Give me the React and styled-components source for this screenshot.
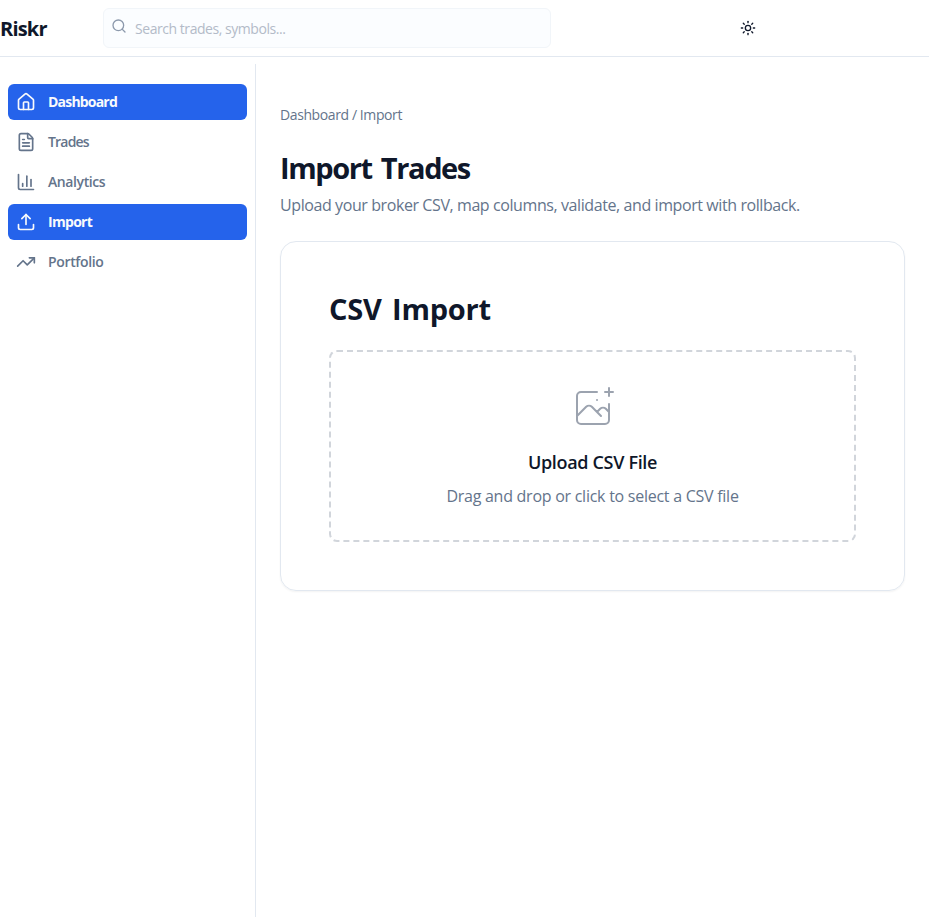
import React from 'react';
import styled, { createGlobalStyle } from 'styled-components';
import { House, FileText, ChartColumn, Upload, TrendingUp, Search, Sun } from 'lucide-react';

const GlobalStyle = createGlobalStyle`
  *, *::before, *::after { box-sizing: border-box; }
  body {
    margin: 0;
    background: #fff;
    color: #0f172a;
    font-family: "Segoe UI", "Open Sans", "Noto Sans", sans-serif;
  }
  h1, h2, h3, p { margin: 0; }
`;

const Page = styled.div`
  display: flex;
  flex-direction: column;
  height: 100vh;
  overflow: hidden;
`;

const Header = styled.header`
  display: flex;
  align-items: center;
  flex: none;
  height: 57px;
  padding-right: 173px;
  border-bottom: 1px solid #e2e8f0;
`;

const Brand = styled.div`
  width: 103px;
  padding-top: 2px;
  font-size: 20px;
  line-height: 28px;
  font-weight: 700;
  letter-spacing: -0.8px;
`;

const SearchBox = styled.label`
  display: flex;
  align-items: center;
  gap: 8px;
  width: 448px;
  height: 40px;
  padding: 0 7px;
  border: 1px solid #f1f5f9;
  border-radius: 6px;
  background: #fbfdff;

  svg {
    flex: none;
    margin-bottom: 4px;
    color: #8c99ac;
  }
`;

const SearchInput = styled.input`
  flex: 1;
  min-width: 0;
  height: 20px;
  margin-top: 1px;
  padding: 0;
  border: 0;
  outline: 0;
  background: transparent;
  font: 400 14px/20px "Segoe UI", "Open Sans", sans-serif;
  letter-spacing: -0.45px;

  &::placeholder {
    color: #b3bbc8;
    opacity: 1;
  }
`;

const ThemeButton = styled.button`
  display: grid;
  place-items: center;
  width: 16px;
  height: 16px;
  margin-left: auto;
  padding: 0;
  border: 0;
  background: none;
  color: #0f172a;
`;

const Body = styled.div`
  display: flex;
  flex: 1;
  min-height: 0;
`;

const Sidebar = styled.nav`
  display: flex;
  flex-direction: column;
  gap: 4px;
  flex: none;
  width: 256px;
  margin-top: 7px;
  padding: 20px 8px;
  border-right: 1px solid #e2e8f0;
`;

const NavItem = styled.a`
  display: flex;
  align-items: center;
  gap: 12px;
  height: 36px;
  padding: 0 8px;
  border-radius: 6px;
  background: ${(p) => (p.$active ? '#2563eb' : 'transparent')};
  color: ${(p) => (p.$active ? '#f8fafc' : '#64748b')};
  font-size: 14px;
  line-height: 20px;
  font-weight: ${(p) => (p.$active ? 700 : 600)};
  letter-spacing: ${(p) => p.$tracking}px;
`;

const Main = styled.main`
  flex: 1;
  min-width: 0;
  padding: 48px 24px;
`;

const Breadcrumb = styled.div`
  color: #64748b;
  font-size: 14px;
  line-height: 20px;
  letter-spacing: -0.4px;
`;

const Title = styled.h1`
  margin-top: 24px;
  padding-top: 2px;
  font-size: 29px;
  line-height: 34px;
  font-weight: 700;
  letter-spacing: -1.4px;
  word-spacing: 3px;
`;

const Subtitle = styled.p`
  margin-top: 8px;
  color: #64748b;
  font-size: 16px;
  line-height: 24px;
  letter-spacing: -0.41px;
`;

const Card = styled.section`
  margin-top: 24px;
  padding: 48px;
  border: 1px solid #e2e8f0;
  border-radius: 16px;
  box-shadow: 0 1px 2px rgba(0, 0, 0, 0.05);
`;

const CardTitle = styled.h2`
  padding-top: 2px;
  font-size: 29px;
  line-height: 34px;
  font-weight: 700;
  letter-spacing: -0.2px;
  word-spacing: 3px;
`;

const DropZone = styled.div`
  display: flex;
  flex-direction: column;
  align-items: center;
  margin-top: 24px;
  padding: 32px;
  border: 2px dashed #d1d5db;
  border-radius: 8px;

  svg { color: #9ca3af; }
`;

const DropTitle = styled.h3`
  margin-top: 16px;
  font-size: 18px;
  line-height: 28px;
  font-weight: 600;
  letter-spacing: -0.33px;
`;

const DropHint = styled.p`
  margin-top: 8px;
  color: #64748b;
  font-size: 16px;
  line-height: 24px;
  letter-spacing: -0.26px;
`;

const NAV = [
  { label: 'Dashboard', Icon: House, active: true, tracking: -0.8 },
  { label: 'Trades', Icon: FileText, tracking: -0.8 },
  { label: 'Analytics', Icon: ChartColumn, tracking: -0.4 },
  { label: 'Import', Icon: Upload, active: true, tracking: -0.7 },
  { label: 'Portfolio', Icon: TrendingUp, tracking: -0.35 },
];

function ImageAddIcon() {
  return (
    <svg width="48" height="48" viewBox="0 0 48 48" fill="none" stroke="currentColor" strokeWidth="2" strokeLinecap="round" strokeLinejoin="round">
      <path d="M28 8H12a4 4 0 00-4 4v20m32-12v8m0 0v8a4 4 0 01-4 4H12a4 4 0 01-4-4v-4m32-4l-3.172-3.172a4 4 0 00-5.656 0L28 28M8 32l9.172-9.172a4 4 0 015.656 0L28 28m0 0l4 4m4-24h8m-4-4v8m-12 4h.02" />
    </svg>
  );
}

export default function App() {
  return (
    <Page>
      <GlobalStyle />
      <Header>
        <Brand>Riskr</Brand>
        <SearchBox>
          <Search size={16} />
          <SearchInput placeholder="Search trades, symbols..." />
        </SearchBox>
        <ThemeButton aria-label="Toggle theme">
          <Sun size={16} />
        </ThemeButton>
      </Header>
      <Body>
        <Sidebar>
          {NAV.map(({ label, Icon, active, tracking }) => (
            <NavItem key={label} $active={active} $tracking={tracking}>
              <Icon size={20} />
              {label}
            </NavItem>
          ))}
        </Sidebar>
        <Main>
          <Breadcrumb>Dashboard / Import</Breadcrumb>
          <Title>Import Trades</Title>
          <Subtitle>Upload your broker CSV, map columns, validate, and import with rollback.</Subtitle>
          <Card>
            <CardTitle>CSV Import</CardTitle>
            <DropZone>
              <ImageAddIcon />
              <DropTitle>Upload CSV File</DropTitle>
              <DropHint>Drag and drop or click to select a CSV file</DropHint>
            </DropZone>
          </Card>
        </Main>
      </Body>
    </Page>
  );
}
